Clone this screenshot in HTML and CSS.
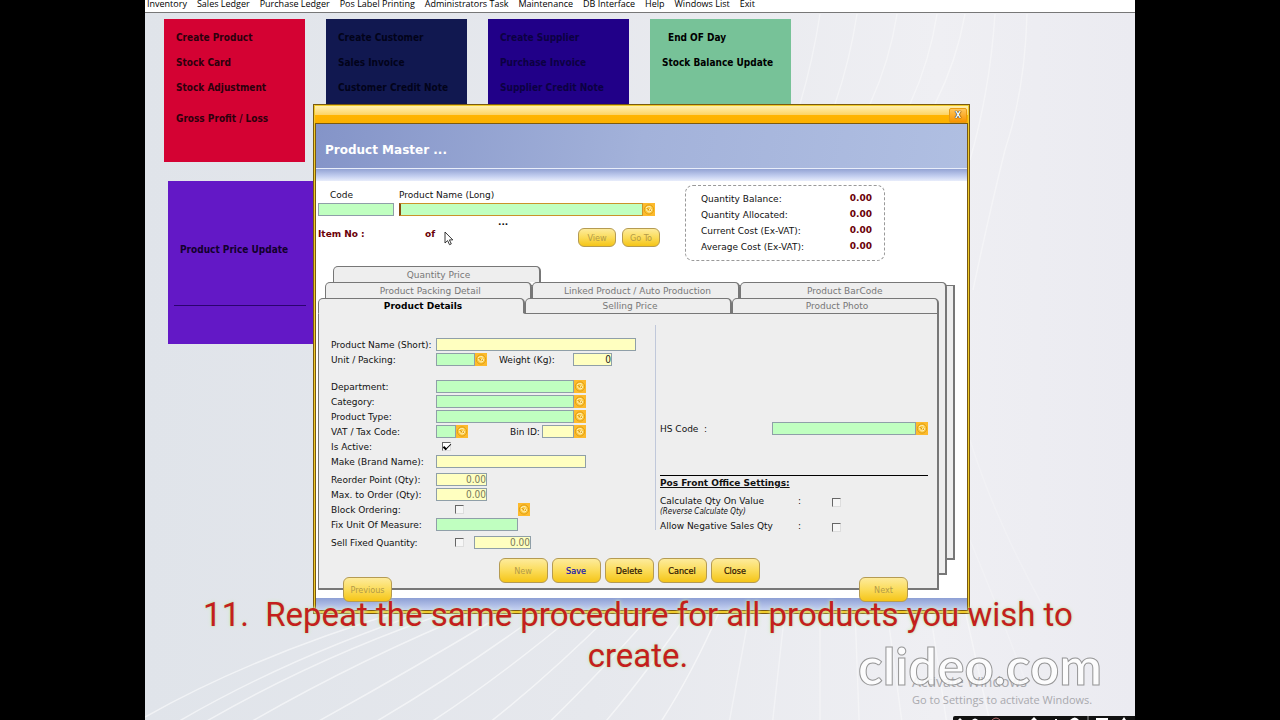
FILE: index.html
```
<!DOCTYPE html>
<html lang="en">
<head>
    <meta charset="UTF-8">
    <meta name="viewport" content="width=device-width, initial-scale=1.0">
    <title>Product Master</title>
    <link rel="stylesheet" href="styles.css">
</head>
<body>
    <!-- shared icon for the lookup buttons -->
    <svg class="defs" width="0" height="0">
        <symbol id="lookup" viewBox="0 0 12 12">
            <circle cx="6" cy="6" r="4.600" fill="#fcc83c" stroke="#dc9a10" stroke-width=".9"/>
            <path d="M3 4.600c1-1.800 3.800-2.200 5.300-.6M3.600 5.600c0 2.200 1.800 3.200 3.400 2.800 1.700-.5 2-2.500.8-3-1-.4-1.800.6-1.100 1.400" fill="none" stroke="#fff6d4" stroke-width=".9"/>
            <path d="M4.400 5.100l1.300 1.100M7.200 6.600l.8.4" stroke="#a86a00" stroke-width=".8"/>
        </symbol>
    </svg>

    <div class="desktop">
        <svg class="rays" viewBox="0 0 990 720" preserveAspectRatio="none" fill="none" stroke="#fff" stroke-width="1.500">
            <path d="M0 717Q110 655 260 610M-5 745Q120 665 285 610M30 740Q160 660 310 610M75 740Q200 665 335 610M130 745Q250 680 365 610M190 745Q290 690 400 610M250 745Q340 690 435 610M315 745Q390 690 470 610M380 745Q440 690 510 610M440 745Q490 690 545 610M500 745Q540 690 575 610"/>
            <path d="M580 745L605 610M625 745L640 610M675 745V610M715 745L710 610M760 745L742 610M805 745L785 610M850 745L820 610" opacity=".7"/>
            <path d="M675 14Q668 60 655 104M712 14Q705 60 690 104M752 14Q745 60 725 104M792 14Q785 60 765 104M820 14Q812 60 790 104M850 14Q845 90 825 160M882 14Q880 90 860 150M860 150Q845 210 828 290" opacity=".7"/>
            <path d="M825 440Q850 520 900 610M825 540Q850 600 880 680" opacity=".4"/>
        </svg>

        <nav class="menubar">
            <a href="#">Inventory</a>
            <a href="#">Sales Ledger</a>
            <a href="#">Purchase Ledger</a>
            <a href="#">Pos Label Printing</a>
            <a href="#">Administrators Task</a>
            <a href="#">Maintenance</a>
            <a href="#">DB Interface</a>
            <a href="#">Help</a>
            <a href="#">Windows List</a>
            <a href="#">Exit</a>
        </nav>

        <div class="cards">
            <div class="card red">
                <a href="#">Create Product</a>
                <a href="#">Stock Card</a>
                <a href="#">Stock Adjustment</a>
                <a href="#" class="apart">Gross Profit / Loss</a>
            </div>
            <div class="card navy">
                <a href="#">Create Customer</a>
                <a href="#">Sales Invoice</a>
                <a href="#">Customer Credit Note</a>
            </div>
            <div class="card blue">
                <a href="#">Create Supplier</a>
                <a href="#">Purchase Invoice</a>
                <a href="#">Supplier Credit Note</a>
            </div>
            <div class="card green">
                <a href="#" class="indent">End OF Day</a>
                <a href="#">Stock Balance Update</a>
            </div>
        </div>
        <div class="card purple">
            <a href="#">Product Price Update</a>
            <hr>
        </div>

        <main class="window">
            <div class="titlebar">
                <button class="close" aria-label="Close window">X</button>
            </div>
            <div class="client">
                <header class="banner"><h1>Product Master ...</h1></header>
                <div class="banner-fade"></div>

                <section class="top">
                    <div class="lookup-area">
                        <div class="codes">
                            <div class="field code">
                                <label for="code">Code</label>
                                <input id="code" class="req" type="text">
                            </div>
                            <div class="field long-name">
                                <label for="longName">Product Name (Long)</label>
                                <div class="combo">
                                    <input id="longName" class="req focused" type="text">
                                    <button class="lookup" aria-label="Find product"><svg><use href="#lookup"/></svg></button>
                                </div>
                            </div>
                        </div>
                        <div class="dots">...</div>
                        <div class="item-row">
                            <span class="item-no">Item No :</span>
                            <span class="item-of">of</span>
                            <button class="gold small" disabled>View</button>
                            <button class="gold small" disabled>Go To</button>
                        </div>
                        <svg class="cursor" viewBox="0 0 10 15"><path d="M1 1v11l2.600-2.400 1.900 4.100 1.800-.8-1.900-4h3.400z" fill="#fff" stroke="#222" stroke-width=".9"/></svg>
                    </div>
                    <dl class="totals">
                        <dt>Quantity Balance:</dt><dd>0.00</dd>
                        <dt>Quantity Allocated:</dt><dd>0.00</dd>
                        <dt>Current Cost (Ex-VAT):</dt><dd>0.00</dd>
                        <dt>Average Cost (Ex-VAT):</dt><dd>0.00</dd>
                    </dl>
                </section>

                <section class="tabset">
                    <div class="sheet back"></div>
                    <div class="sheet middle"></div>
                    <div class="tabs row-one">
                        <button>Quantity Price</button>
                    </div>
                    <div class="tabs row-two">
                        <button>Product Packing Detail</button>
                        <button>Linked Product / Auto Production</button>
                        <button>Product BarCode</button>
                    </div>
                    <div class="tabs row-three">
                        <button class="active">Product Details</button>
                        <button>Selling Price</button>
                        <button>Product Photo</button>
                    </div>

                    <form class="panel">
                        <div class="columns">
                            <div class="left">
                                <div class="group">
                                    <div class="row">
                                        <label for="shortName">Product Name (Short):</label>
                                        <input id="shortName" class="w200" type="text">
                                    </div>
                                    <div class="row">
                                        <label for="unit">Unit / Packing:</label>
                                        <input id="unit" class="req w39" type="text">
                                        <button type="button" class="lookup" aria-label="Find unit"><svg><use href="#lookup"/></svg></button>
                                        <label for="weight" class="second">Weight (Kg):</label>
                                        <input id="weight" class="num w39 dark" type="text" value="0">
                                    </div>
                                </div>
                                <div class="group">
                                    <div class="row">
                                        <label for="dept">Department:</label>
                                        <input id="dept" class="req w138" type="text">
                                        <button type="button" class="lookup" aria-label="Find department"><svg><use href="#lookup"/></svg></button>
                                    </div>
                                    <div class="row">
                                        <label for="category">Category:</label>
                                        <input id="category" class="req w138" type="text">
                                        <button type="button" class="lookup" aria-label="Find category"><svg><use href="#lookup"/></svg></button>
                                    </div>
                                    <div class="row">
                                        <label for="type">Product Type:</label>
                                        <input id="type" class="req w138" type="text">
                                        <button type="button" class="lookup" aria-label="Find type"><svg><use href="#lookup"/></svg></button>
                                    </div>
                                    <div class="row">
                                        <label for="vat">VAT / Tax Code:</label>
                                        <input id="vat" class="req w20" type="text">
                                        <button type="button" class="lookup" aria-label="Find VAT code"><svg><use href="#lookup"/></svg></button>
                                        <label for="bin" class="bin">Bin ID:</label>
                                        <input id="bin" class="w32" type="text">
                                        <button type="button" class="lookup" aria-label="Find bin"><svg><use href="#lookup"/></svg></button>
                                    </div>
                                    <div class="row">
                                        <label for="active">Is Active:</label>
                                        <input id="active" class="check-a" type="checkbox" checked>
                                    </div>
                                    <div class="row">
                                        <label for="make">Make (Brand Name):</label>
                                        <input id="make" class="w150" type="text">
                                    </div>
                                </div>
                                <div class="group">
                                    <div class="row">
                                        <label for="reorder">Reorder Point (Qty):</label>
                                        <input id="reorder" class="num w51" type="text" value="0.00">
                                    </div>
                                    <div class="row">
                                        <label for="maxOrder">Max. to Order (Qty):</label>
                                        <input id="maxOrder" class="num w51" type="text" value="0.00">
                                    </div>
                                    <div class="row">
                                        <label for="block">Block Ordering:</label>
                                        <input id="block" class="check-b" type="checkbox">
                                        <button type="button" class="lookup measure" aria-label="Find measure"><svg><use href="#lookup"/></svg></button>
                                    </div>
                                    <div class="row">
                                        <label for="measure">Fix Unit Of Measure:</label>
                                        <input id="measure" class="req w82" type="text">
                                    </div>
                                </div>
                                <div class="group">
                                    <div class="row">
                                        <label for="sellFixed">Sell Fixed Quantity:</label>
                                        <input id="sellFixed" class="check-b" type="checkbox">
                                        <input class="num w57" type="text" value="0.00" aria-label="Fixed quantity">
                                    </div>
                                </div>
                            </div>

                            <div class="right">
                                <div class="row hs">
                                    <label for="hs">HS Code&nbsp; :</label>
                                    <input id="hs" class="req" type="text">
                                    <button type="button" class="lookup" aria-label="Find HS code"><svg><use href="#lookup"/></svg></button>
                                </div>
                                <hr>
                                <h2>Pos Front Office Settings:</h2>
                                <div class="setting">
                                    <label for="calc">Calculate Qty On Value<small>(Reverse Calculate Qty)</small></label>
                                    <span>:</span>
                                    <input id="calc" type="checkbox">
                                </div>
                                <div class="setting">
                                    <label for="negative">Allow Negative Sales Qty</label>
                                    <span>:</span>
                                    <input id="negative" type="checkbox">
                                </div>
                            </div>
                        </div>
                        <div class="actions">
                            <button type="button" class="gold" disabled>New</button>
                            <button type="button" class="gold save">Save</button>
                            <button type="button" class="gold">Delete</button>
                            <button type="button" class="gold">Cancel</button>
                            <button type="button" class="gold">Close</button>
                        </div>
                    </form>
                </section>

                <div class="pager">
                    <button class="gold" disabled>Previous</button>
                    <button class="gold" disabled>Next</button>
                </div>
                <footer class="foot"></footer>
            </div>
        </main>

        <div class="activate">
            <strong>Activate Windows</strong>
            <span>Go to Settings to activate Windows.</span>
        </div>
        <div class="watermark">clideo.com</div>
        <p class="caption">11.&nbsp; Repeat the same procedure for all products you wish to create.</p>

        <!-- top edge of the taskbar -->
        <svg class="taskbar" viewBox="0 0 182 4">
            <path d="M0 4V2q0-2 2-2h180v4z" fill="#111"/>
            <path d="M5 4l2-2 2 2zM19 4q3-3 6 0zM78 4l3-3 3 3zM117 4q5-5 9 0zM143 2h12v2h-12zM169 4l2-3 2 3zM102 3h2v1h-2z" fill="#fff"/>
            <path d="M39 4q4-4 8 0" stroke="#a66" fill="none"/>
            <path d="M135 0v4" stroke="#999"/>
        </svg>
    </div>
</body>
</html>
```
FILE: styles.css
```
* {
    box-sizing: border-box;
}
body {
    margin: 0;
    background: #000;
    font-family: "DejaVu Sans", Verdana, sans-serif;
    font-size: 9px;
    color: #111;
}
a {
    color: inherit;
    text-decoration: none;
}
button, input {
    font: inherit;
    margin: 0;
    padding: 0;
}
.defs {
    position: absolute;
}
.desktop {
    position: relative;
    min-height: 100vh;
    margin: 0 145px;
    overflow: hidden;
    background: linear-gradient(90deg, #e0e4ea, #e6e8ed 45%, #efeff3 80%, #ebebf1);
}
.rays {
    position: absolute;
    width: 100%;
    height: 100%;
    opacity: .55;
}

/* menu */
.menubar {
    position: relative;
    display: flex;
    gap: 10px;
    height: 13px;
    padding-left: 2px;
    background: #fff;
    border-bottom: 1px solid #777;
    font-family: "Open Sans", sans-serif;
    font-size: 9px;
    line-height: 8px;
    white-space: nowrap;
    color: #000;
}

/* shortcut cards */
.cards {
    position: relative;
    display: flex;
    align-items: flex-start;
    gap: 21px;
    margin: 6px 0 0 19px;
}
.card {
    position: relative;
    display: flex;
    flex-direction: column;
    width: 141px;
    height: 143px;
    padding: 12px 0 0 12px;
    font-family: "DejaVu Sans Condensed", Tahoma, sans-serif;
    font-size: 10px;
    font-weight: bold;
    line-height: 14px;
    gap: 11px;
    white-space: nowrap;
}
.card .apart {
    margin-top: 6px;
}
.card .indent {
    padding-left: 6px;
}
.red { background: #d40233; color: #2c000c; }
.navy { background: #111850; color: #02031a; }
.blue { background: #210088; color: #0c0042; }
.green { background: #77c298; color: #000; }
.purple {
    width: 160px;
    height: 163px;
    margin: 19px 0 0 23px;
    padding: 62px 22px 0 6px;
    background: #6318c6;
    color: #12002c;
    gap: 48px;
}
.purple a {
    padding-left: 6px;
}
.purple hr {
    width: 100%;
    margin: 0;
    border: 0;
    border-top: 1px solid #2c0470;
}

/* window */
.window {
    position: absolute;
    top: 104px;
    left: 168px;
    right: 165px;
    border: 1px solid #7a5a10;
    background: #f0cb2c;
    padding: 1px 1px 2px;
}
.titlebar {
    display: flex;
    justify-content: flex-end;
    height: 17px;
    background: linear-gradient(#fff0b0, #fdd568 50%, #ffb400 55%, #fbb000);
}
.close {
    width: 18px;
    height: 15px;
    margin: 2px 1px 0 0;
    border: 1px solid #e89a10;
    border-radius: 2px;
    background: linear-gradient(#ffc65a, #f79400);
    color: #fff;
    font-size: 8px;
    font-weight: bold;
    line-height: 12px;
    text-shadow: 0 0 1px #000, 0 0 1px #000;
}
.client {
    border: 1px solid #7a5a10;
    background: #fff;
}
.banner {
    display: flex;
    align-items: center;
    height: 44px;
    padding: 8px 0 0 9px;
    background: linear-gradient(100deg, #8494c8, #a3b2da 50%, #b0bfe2);
}
.banner h1 {
    margin: 0;
    color: #fff;
    font-size: 12px;
}
.banner-fade {
    height: 13px;
    border-top: 1px solid #e8edfa;
    background: linear-gradient(#93a3d4, #c4cff0 60%, #e8edfb);
}
input[type="text"] {
    width: 100%;
    height: 13px;
    border: 1px solid #8f9fa8;
    background: #ffffc0;
    outline: 0;
}
input[type="text"].req {
    background: #c0ffc0;
}
input.num {
    color: #77775a;
    text-align: right;
    font-family: "DejaVu Sans Condensed", Tahoma, sans-serif;
    font-size: 10px;
}
input.dark {
    color: #222;
}
.lookup {
    flex: none;
    width: 12px;
    height: 13px;
    border: 0;
    background: #fdba2c;
}
.lookup svg {
    display: block;
    width: 12px;
    height: 13px;
}
.top {
    display: flex;
    gap: 25px;
    height: 85px;
    padding: 4px 0 0 2px;
}
.lookup-area {
    position: relative;
    width: 342px;
    padding-top: 3px;
}
.codes {
    display: flex;
    gap: 5px;
}
.field label {
    display: block;
    line-height: 15px;
}
.code {
    width: 76px;
}
.code label {
    padding-left: 12px;
}
.long-name {
    width: 256px;
}
.combo {
    display: flex;
}
input[type="text"].focused {
    border-color: #c9932a;
    border-left: 2px solid #8a4a10;
}
.dots {
    padding-left: 180px;
    height: 12px;
    font-weight: bold;
    line-height: 12px;
}
.item-row {
    display: flex;
    align-items: flex-start;
    gap: 6px;
    font-weight: bold;
    line-height: 12px;
    color: #6a0008;
}
.item-no {
    width: 101px;
}
.item-of {
    flex: 1;
}
.gold {
    width: 49px;
    height: 25px;
    border: 1px solid #b59b52;
    border-radius: 6px;
    background: linear-gradient(#fdeb9c, #fbdc5a 50%, #f5c518);
    color: #2a1200;
    font-family: "DejaVu Sans Condensed", Tahoma, sans-serif;
    font-size: 9px;
    font-weight: normal;
    -webkit-text-stroke: 0.2px;
}
.gold:disabled {
    color: #b39a48;
    -webkit-text-stroke: 0;
}
.gold.small {
    width: 38px;
    height: 19px;
}
.gold.save {
    color: #1010b0;
}
.cursor {
    position: absolute;
    left: 126px;
    top: 46px;
    width: 10px;
    height: 15px;
}
.totals {
    display: grid;
    grid-template-columns: 1fr auto;
    align-content: start;
    width: 200px;
    height: 76px;
    margin: 0;
    padding: 5px 12px 0 15px;
    border: 1px dashed #999;
    border-radius: 8px;
    line-height: 16px;
}
.totals dd {
    margin: 0;
    color: #6a0008;
    font-weight: bold;
    line-height: 14px;
}

/* tabs */
.tabset {
    position: relative;
    z-index: 0;
    margin: 0 28px 0 2px;
}
.sheet {
    position: absolute;
    z-index: -1;
    background: #eee;
    border: 1px solid #777;
    border-width: 1px 2px 2px 1px;
}
.sheet.back {
    inset: 19px -16px 30px 50px;
}
.sheet.middle {
    inset: 24px -8px 15px 50px;
    border-top: 0;
}
.tabs {
    display: flex;
    height: 16px;
}
.tabs button {
    flex: 1;
    padding-left: 4px;
    border: 1px solid #777;
    border-right-width: 2px;
    border-bottom: 0;
    border-radius: 5px 5px 0 0;
    background: #eee;
    color: #777;
    line-height: 14px;
}
.row-one {
    width: 208px;
    margin-left: 15px;
}
.row-two {
    margin: 0 -8px 0 7px;
}
.tabs.row-three button {
    border-bottom: 1px solid #777;
}
.tabs.row-three .active {
    border-bottom-color: #eee;
    color: #000;
    font-weight: bold;
}
.panel {
    padding: 23px 0 5px 12px;
    border: 1px solid #777;
    border-width: 0 2px 2px 1px;
    background: #eee;
}
.columns {
    display: flex;
}
.left {
    flex: none;
    width: 324px;
}
.group {
    margin-bottom: 12px;
}
.group + .group {
    margin-bottom: 3px;
}
.row {
    display: flex;
    align-items: center;
    height: 15px;
    white-space: nowrap;
}
.row > label:first-child {
    flex: none;
    width: 105px;
}
.row .w20 { width: 20px; }
.row .w32 { width: 32px; }
.row .w39 { width: 39px; }
.row .w51 { width: 51px; }
.row .w57 { width: 57px; }
.row .w82 { width: 82px; }
.row .w138 { width: 138px; }
.row .w150 { width: 150px; }
.row .w200 { width: 200px; }
.row .second {
    width: 74px;
    margin-left: 12px;
}
.row .bin {
    width: 32px;
    margin-left: 42px;
}
input[type="checkbox"] {
    appearance: none;
    width: 9px;
    height: 9px;
    border: 1px solid #666;
    border-right-color: #ddd;
    border-bottom-color: #ddd;
    background: #f6f6f6;
}
input[type="checkbox"]:checked {
    background: #fff;
}
input[type="checkbox"]:checked::after {
    content: "";
    display: block;
    width: 6px;
    height: 3px;
    margin: 1px 0 0;
    border: solid #000;
    border-width: 0 0 1px 2px;
    transform: rotate(-45deg);
}
.row .check-a {
    margin-left: 6px;
}
.row .check-b {
    margin: 0 10px 0 19px;
}
.row .measure {
    margin-left: 44px;
}
.right {
    flex: 1;
    align-self: flex-start;
    height: 205px;
    margin-top: -12px;
    padding: 96px 14px 0 4px;
    border-left: 1px solid #c0c8da;
}
.row.hs > label {
    width: 112px;
}
.row.hs input {
    width: 144px;
}
.right hr {
    margin: 39px 0 0;
    border: 0;
    border-top: 1px solid #000;
}
.right h2 {
    margin: 0 0 4px;
    font-size: 9px;
    line-height: 15px;
    text-decoration: underline;
}
.setting {
    display: grid;
    grid-template-columns: 138px 34px auto;
    align-items: start;
    justify-content: start;
    line-height: 13px;
    margin-bottom: 4px;
}
.setting small {
    display: block;
    font-family: "DejaVu Sans Condensed", Tahoma, sans-serif;
    font-size: 8px;
    font-style: italic;
    line-height: 8px;
}
.setting input {
    margin-top: 3px;
}
.actions {
    display: flex;
    justify-content: center;
    gap: 4px;
    margin-top: 5px;
    padding-right: 10px;
}
.pager {
    position: relative;
    z-index: 1;
    display: flex;
    justify-content: space-between;
    margin: -13px 59px 0 27px;
}
.foot {
    height: 12px;
    margin-top: -4px;
    background: linear-gradient(#8d9fd4, #c6d2f2);
}

/* overlays */
.activate {
    position: absolute;
    right: 38px;
    bottom: 13px;
    width: 185px;
    color: #a9a9ae;
    font-family: "Open Sans", sans-serif;
    font-size: 11px;
    white-space: nowrap;
}
.activate strong {
    display: block;
    font-size: 14px;
    font-weight: normal;
    line-height: 20px;
}
.watermark {
    position: absolute;
    right: 33px;
    bottom: 23px;
    color: #fff;
    opacity: .85;
    font-family: Lato, sans-serif;
    font-size: 51px;
    font-weight: bold;
    line-height: 62px;
    -webkit-text-stroke: 1px #888;
}
.caption {
    position: absolute;
    left: 48px;
    right: 52px;
    top: 594px;
    margin: 0;
    color: #c4201c;
    font-family: Roboto, sans-serif;
    font-size: 33px;
    line-height: 41px;
    text-align: center;
    text-shadow: 0 0 2px #b9dca0, 0 0 4px #d4ecc4;
}
.taskbar {
    position: absolute;
    right: 0;
    bottom: 0;
    width: 182px;
    height: 4px;
}
```
